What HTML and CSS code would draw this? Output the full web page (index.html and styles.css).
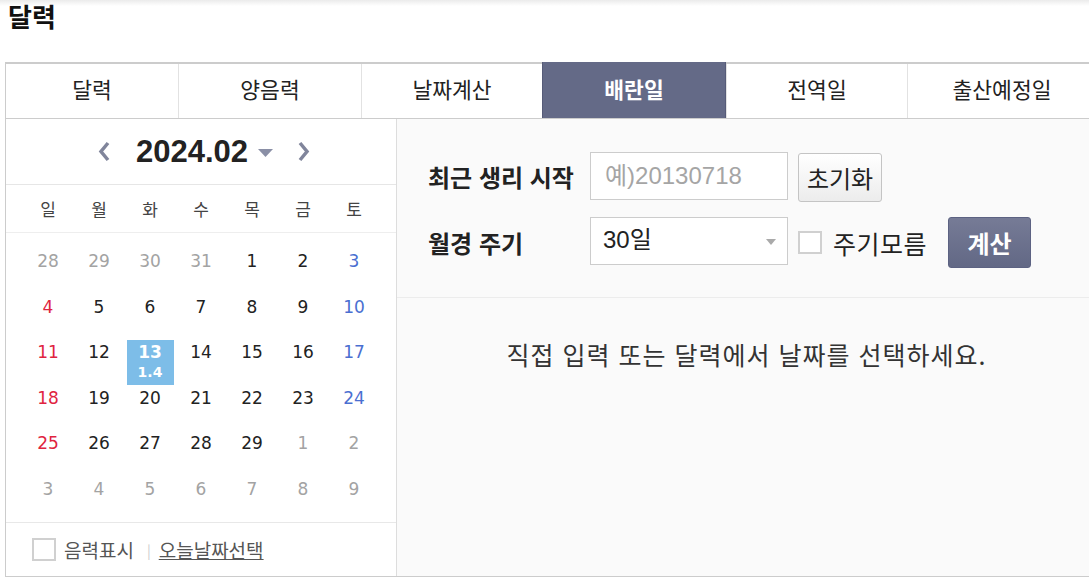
FILE: index.html
```html
<!DOCTYPE html>
<html lang="ko">
<head>
    <meta charset="UTF-8">
    <meta name="viewport" content="width=device-width, initial-scale=1.0">
    <title>달력 - 배란일</title>
    <link rel="stylesheet" href="styles.css">
</head>
<body>

<h2 class="page-title">달력</h2>

<div class="calendar-box">
    <ul class="tabs">
        <li>달력</li>
        <li>양음력</li>
        <li>날짜계산</li>
        <li class="on">배란일</li>
        <li>전역일</li>
        <li>출산예정일</li>
    </ul>

    <div class="panel">
        <div class="cal">
            <div class="cal-head">
                <svg class="arrow" width="12" height="21" viewBox="0 0 12 21"><polyline points="10,2 3,10.5 10,19" fill="none" stroke="#80859b" stroke-width="3.5"/></svg>
                <span class="ym">2024.02</span>
                <svg class="drop" width="15" height="8" viewBox="0 0 15 8"><polygon points="0,0 15,0 7.5,8" fill="#8a8fa6"/></svg>
                <svg class="arrow next" width="12" height="21" viewBox="0 0 12 21"><polyline points="2,2 9,10.5 2,19" fill="none" stroke="#80859b" stroke-width="3.5"/></svg>
            </div>

            <div class="week">
                <span>일</span><span>월</span><span>화</span><span>수</span><span>목</span><span>금</span><span>토</span>
            </div>

            <div class="days">
                <span class="day off">28</span><span class="day off">29</span><span class="day off">30</span><span class="day off">31</span><span class="day">1</span><span class="day">2</span><span class="day sat">3</span>
                <span class="day sun">4</span><span class="day">5</span><span class="day">6</span><span class="day">7</span><span class="day">8</span><span class="day">9</span><span class="day sat">10</span>
                <span class="day sun">11</span><span class="day">12</span><span class="day sel">13<em class="lunar">1.4</em></span><span class="day">14</span><span class="day">15</span><span class="day">16</span><span class="day sat">17</span>
                <span class="day sun">18</span><span class="day">19</span><span class="day">20</span><span class="day">21</span><span class="day">22</span><span class="day">23</span><span class="day sat">24</span>
                <span class="day sun">25</span><span class="day">26</span><span class="day">27</span><span class="day">28</span><span class="day">29</span><span class="day off">1</span><span class="day off">2</span>
                <span class="day off">3</span><span class="day off">4</span><span class="day off">5</span><span class="day off">6</span><span class="day off">7</span><span class="day off">8</span><span class="day off">9</span>
            </div>

            <div class="cal-foot">
                <span class="check"></span>
                <span class="foot-label">음력표시</span>
                <span class="bar">|</span>
                <a class="today" href="#">오늘날짜선택</a>
            </div>
        </div>

        <div class="calc">
            <div class="form">
                <div class="row">
                    <label class="label" for="startDate">최근 생리 시작</label>
                    <input class="date-input" type="text" id="startDate" placeholder="예)20130718">
                    <button class="btn-reset">초기화</button>
                </div>
                <div class="row row2">
                    <span class="label">월경 주기</span>
                    <div class="select">30일<span class="select-arrow"></span></div>
                    <span class="check"></span>
                    <span class="check-label">주기모름</span>
                    <button class="btn-calc">계산</button>
                </div>
            </div>
            <p class="message">직접 입력 또는 달력에서 날짜를 선택하세요.</p>
        </div>
    </div>
</div>

</body>
</html>
```

FILE: styles.css
```css
html {
    overflow: hidden;
}
body {
    margin: 0;
    font-family: "Noto Sans CJK KR", "Malgun Gothic", sans-serif;
    color: #222;
    background: linear-gradient(#ebebeb, #fff 6px) no-repeat;
}
.page-title {
    margin: 0;
    padding-left: 8px;
    font-size: 26px;
    line-height: 32px;
    color: #111;
}
.calendar-box {
    width: 1090px;
    margin: 30px 0 0 5px;
    border-left: 1px solid #ccc;
    border-bottom: 1px solid #ccc;
}
.tabs {
    display: grid;
    grid-template-columns: 172px 183px 181px 184px 181px 1fr;
    margin: 0;
    padding: 0;
    list-style: none;
    border-top: 2px solid #ccc;
    border-bottom: 1px solid #ccc;
}
.tabs li {
    height: 54px;
    line-height: 50px;
    text-align: center;
    font-size: 21.5px;
    color: #222;
    border-left: 1px solid #e2e2e2;
}
.tabs li:first-child {
    border-left: none;
}
.tabs li.on {
    height: 56px;
    margin-top: -2px;
    padding-top: 2px;
    box-sizing: border-box;
    line-height: 50px;
    background: #646a87;
    color: #fff;
    font-weight: bold;
    border-left: 1px solid #565b78;
    border-right: 1px solid #565b78;
}
.panel {
    display: flex;
    height: 457px;
}
.cal {
    width: 390px;
    border-right: 1px solid #ddd;
    background: #fff;
}
.cal-head {
    display: flex;
    align-items: center;
    justify-content: center;
    height: 65px;
    padding-left: 6px;
    border-bottom: 1px solid #e6e6e6;
}
.ym {
    margin-left: 26px;
    font-family: "Liberation Sans", Arial, sans-serif;
    font-size: 31px;
    font-weight: bold;
    color: #222;
}
.drop {
    margin: 2px 0 0 10px;
}
.arrow.next {
    margin-left: 25px;
}
.week {
    display: grid;
    grid-template-columns: repeat(7, 51px);
    height: 47px;
    padding-left: 16.5px;
    align-items: center;
    border-bottom: 1px solid #eee;
}
.week span {
    text-align: center;
    font-size: 17px;
    color: #444;
}
.days {
    display: grid;
    grid-template-columns: repeat(7, 51px);
    grid-auto-rows: 45.5px;
    padding: 16px 0 0 16.5px;
}
.day {
    display: block;
    width: 47px;
    height: 45px;
    margin: 0 auto;
    text-align: center;
    font-family: "DejaVu Sans", Tahoma, sans-serif;
    font-size: 17px;
    line-height: 24px;
    color: #222;
}
.day.off {
    color: #a3a3a3;
}
.day.sun {
    color: #e0243f;
}
.day.sat {
    color: #4a6fd1;
}
.day.sel {
    background: #7dbde8;
    color: #fff;
    font-weight: bold;
}
.lunar {
    display: block;
    font-style: normal;
    font-size: 14px;
    line-height: 17px;
}
.cal-foot {
    display: flex;
    align-items: center;
    height: 53px;
    padding-left: 26px;
    border-top: 1px solid #e8e8e8;
}
.check {
    display: inline-block;
    width: 24px;
    height: 23px;
    box-sizing: border-box;
    border: 2px solid #d0d0d0;
    background: #fff;
}
.foot-label {
    margin-left: 8px;
    font-size: 19px;
    color: #555;
}
.bar {
    margin: 0 8px 0 13px;
    font-size: 14px;
    color: #ccc;
}
.today {
    font-size: 19px;
    color: #555;
}
.calc {
    flex: 1;
    background: #fafafa;
}
.form {
    padding: 33px 0 29px 31px;
    border-bottom: 1px solid #ececec;
}
.row {
    display: flex;
    align-items: center;
    height: 50px;
}
.row2 {
    height: 51px;
    margin-top: 15px;
}
.label {
    width: 162px;
    font-size: 24px;
    font-weight: bold;
    line-height: 46px;
    color: #222;
}
.date-input, .select {
    width: 198px;
    height: 48px;
    box-sizing: border-box;
    align-self: flex-start;
    border: 1px solid #ccc;
    background: #fff;
    margin: 0;
}
.date-input {
    padding: 0 0 0 14px;
    font-family: "Liberation Sans", "Noto Sans CJK KR", sans-serif;
    font-size: 24px;
    color: #222;
    border-radius: 0;
    outline: none;
}
.date-input::placeholder {
    color: #a5a5a5;
}
.btn-reset {
    width: 84px;
    height: 49px;
    margin: 1px 0 0 10px;
    align-self: flex-start;
    padding: 0;
    font-family: "Noto Sans CJK KR", sans-serif;
    font-size: 24px;
    color: #222;
    background: linear-gradient(#fff, #ececec);
    border: 1px solid #c4c4c4;
    border-radius: 3px;
}
.select {
    position: relative;
    padding-left: 12px;
    font-family: "Liberation Sans", "Noto Sans CJK KR", sans-serif;
    font-size: 24px;
    line-height: 44px;
    color: #222;
}
.select-arrow {
    position: absolute;
    right: 11px;
    top: 21px;
    border-left: 5px solid transparent;
    border-right: 5px solid transparent;
    border-top: 6px solid #aaa;
}
.row2 .check {
    margin-left: 10px;
}
.check-label {
    margin-left: 11px;
    font-size: 25px;
    letter-spacing: 0.5px;
    color: #222;
}
.btn-calc {
    width: 83px;
    height: 51px;
    margin-left: 21px;
    padding: 0;
    font-family: "Noto Sans CJK KR", sans-serif;
    font-size: 24px;
    font-weight: bold;
    color: #fff;
    background: linear-gradient(#767b96, #626885);
    border: 1px solid #5c6282;
    border-radius: 3px;
}
.message {
    margin: 41px 0 0;
    text-align: center;
    font-size: 25px;
    line-height: 30px;
    letter-spacing: 1px;
    color: #333;
}
```
